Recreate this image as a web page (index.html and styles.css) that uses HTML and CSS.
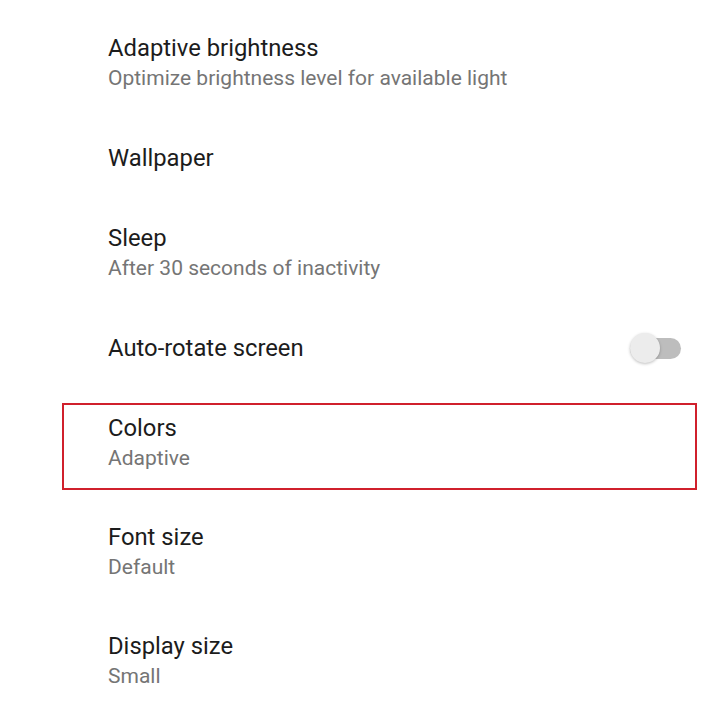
FILE: index.html
```html
<!DOCTYPE html>
<html lang="en">
<head>
<meta charset="utf-8">
<title>Display</title>
<link rel="stylesheet" href="styles.css">
</head>
<body>
<ul class="prefs">
  <li class="pref pref--two">
    <div class="pref__text">
      <span class="pref__title">Adaptive brightness</span>
      <span class="pref__summary">Optimize brightness level for available light</span>
    </div>
  </li>
  <li class="pref pref--one">
    <div class="pref__text">
      <span class="pref__title">Wallpaper</span>
    </div>
  </li>
  <li class="pref pref--two">
    <div class="pref__text">
      <span class="pref__title">Sleep</span>
      <span class="pref__summary">After 30 seconds of inactivity</span>
    </div>
  </li>
  <li class="pref pref--one">
    <div class="pref__text">
      <span class="pref__title">Auto-rotate screen</span>
    </div>
    <span class="switch" role="switch" aria-checked="false">
      <span class="switch__track"></span>
      <span class="switch__thumb"></span>
    </span>
  </li>
  <li class="pref pref--two pref--marked">
    <div class="pref__text">
      <span class="pref__title">Colors</span>
      <span class="pref__summary">Adaptive</span>
    </div>
  </li>
  <li class="pref pref--two">
    <div class="pref__text">
      <span class="pref__title">Font size</span>
      <span class="pref__summary">Default</span>
    </div>
  </li>
  <li class="pref pref--two">
    <div class="pref__text">
      <span class="pref__title">Display size</span>
      <span class="pref__summary">Small</span>
    </div>
  </li>
</ul>
</body>
</html>
```

FILE: styles.css
```css
html, body {
  margin: 0;
  padding: 0;
  background: #ffffff;
}

body {
  font-family: Roboto, "Noto Sans", sans-serif;
  overflow: hidden;
}

.prefs {
  list-style: none;
  margin: 0;
  padding: 8px 0 0 0;
}

.pref {
  position: relative;
  display: flex;
  align-items: center;
  padding: 0 39px 0 108px;
  box-sizing: border-box;
}

.pref--two {
  height: 109px;
}

.pref--one {
  height: 81px;
}

.pref__text {
  flex: 1;
  display: flex;
  flex-direction: column;
}

.pref__title {
  font-size: 23.8px;
  line-height: 30px;
  color: #1c1c1c;
}

.pref__summary {
  font-size: 21px;
  line-height: 30px;
  color: #757575;
}

/* highlight frame around a single entry */
.pref--marked::after {
  content: "";
  position: absolute;
  left: 62px;
  right: 23px;
  top: 15px;
  bottom: 7px;
  border: 2px solid #d0202c;
  pointer-events: none;
}

/* off-state switch */
.switch {
  position: relative;
  width: 51px;
  height: 30px;
  flex: none;
}

.switch__track {
  position: absolute;
  left: 0;
  right: 0;
  top: 5px;
  height: 21px;
  border-radius: 11px;
  background: #bdbdbd;
}

.switch__thumb {
  position: absolute;
  left: 0;
  top: 0;
  width: 30px;
  height: 30px;
  border-radius: 50%;
  background: #ececec;
  box-shadow: 0 1px 3px rgba(0, 0, 0, 0.25);
}
```
